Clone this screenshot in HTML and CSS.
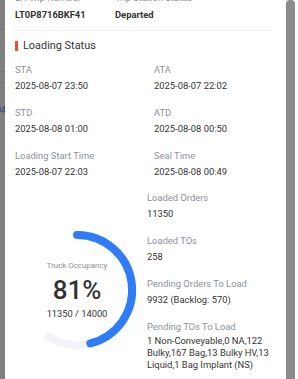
FILE: index.html
```html
<!DOCTYPE html>
<html>

<head>
  <meta charset="UTF-8" />
  <title>Loading Status</title>
  <link rel="stylesheet" href="styles.css">
</head>

<body>
  <div class="page">
    <!-- table behind the overlay -->
    <div class="backdrop">
      <div class="bg-row"></div>
      <div class="bg-row"></div>
      <div class="bg-row"></div>
      <div class="bg-link">04</div>
    </div>

    <div class="drawer">
      <div class="trip">
        <div class="field">
          <div class="label">LH Trip Number</div>
          <div class="value strong">LT0P8716BKF41</div>
        </div>
        <div class="field">
          <div class="label">Trip Station Status</div>
          <div class="value strong">Departed</div>
        </div>
      </div>

      <div class="divider"></div>

      <h3 class="section-title">Loading Status</h3>

      <div class="grid">
        <div class="field">
          <div class="label">STA</div>
          <div class="value">2025-08-07 23:50</div>
        </div>
        <div class="field">
          <div class="label">ATA</div>
          <div class="value">2025-08-07 22:02</div>
        </div>
        <div class="field">
          <div class="label">STD</div>
          <div class="value">2025-08-08 01:00</div>
        </div>
        <div class="field">
          <div class="label">ATD</div>
          <div class="value">2025-08-08 00:50</div>
        </div>
        <div class="field">
          <div class="label">Loading Start Time</div>
          <div class="value">2025-08-07 22:03</div>
        </div>
        <div class="field">
          <div class="label">Seal Time</div>
          <div class="value">2025-08-08 00:49</div>
        </div>
      </div>

      <div class="summary">
        <div class="gauge">
          <svg viewBox="0 0 124 130" width="124" height="130">
            <path d="M62 10 A55 55 0 1 1 32.9 111.6" fill="none" stroke="#f2f4f7" stroke-width="8"
              stroke-linecap="round"></path>
            <path d="M62 10 A55 55 0 0 1 75.3 118.4" fill="none" stroke="#2f7cf6" stroke-width="8"
              stroke-linecap="round"></path>
          </svg>
          <div class="gauge-text">
            <div class="gauge-title">Truck Occupancy</div>
            <div class="gauge-percent">81%</div>
            <div class="gauge-count">11350 / 14000</div>
          </div>
        </div>

        <div class="stats">
          <div class="field">
            <div class="label">Loaded Orders</div>
            <div class="value">11350</div>
          </div>
          <div class="field">
            <div class="label">Loaded TOs</div>
            <div class="value">258</div>
          </div>
          <div class="field">
            <div class="label">Pending Orders To Load</div>
            <div class="value">9932 (Backlog: 570)</div>
          </div>
          <div class="field">
            <div class="label">Pending TOs To Load</div>
            <div class="value multi">1 Non-Conveyable,0 NA,122 Bulky,167 Bag,13 Bulky HV,13 Liquid,1 Bag Implant (NS)</div>
          </div>
        </div>
      </div>
    </div>

    <div class="scroll">
      <div class="thumb"></div>
    </div>
  </div>
</body>

</html>
```

FILE: styles.css
```css
body {
  margin: 0;
  font-family: Roboto, "Noto Sans", sans-serif;
  background-color: #808080;
}

.page {
  display: flex;
  width: 298px;
  height: 379px;
  overflow: hidden;
}

.backdrop {
  width: 5px;
  flex-shrink: 0;
  overflow: hidden;
  background-color: #7f7f7f;
  display: flex;
  flex-direction: column;
}

.bg-row {
  height: 1px;
  background-color: #747474;
  margin-top: 29px;
}

.bg-row:nth-child(2) {
  margin-top: 41px;
}

.bg-row:nth-child(3) {
  margin-top: 10px;
}

.bg-link {
  margin-top: 22px;
  margin-left: -4px;
  font-size: 9px;
  color: #2c3f8c;
}

.drawer {
  width: 281px;
  flex-shrink: 0;
  background-color: #fff;
  padding: 0 14px 0 10px;
  box-sizing: border-box;
}

.scroll {
  width: 12px;
  flex-shrink: 0;
  background-color: #fff;
}

.thumb {
  width: 9px;
  height: 100%;
  background-color: #8b8b8b;
  border-radius: 4px 4px 0 0;
}

.field {
  display: flex;
  flex-direction: column;
  gap: 2px;
}

.label {
  font-size: 9.4px;
  line-height: 14px;
  color: #8c9099;
  white-space: nowrap;
}

.value {
  font-size: 9.4px;
  line-height: 14px;
  color: #333;
}

.strong {
  font-weight: 700;
}

.trip {
  display: grid;
  grid-template-columns: 100px 1fr;
  margin-top: -9px;
}

.trip .field {
  gap: 3px;
}

.divider {
  height: 1px;
  background-color: #eceef2;
  margin-top: 8px;
}

.section-title {
  margin: 7px 0 0;
  font-size: 10.9px;
  line-height: 16px;
  font-weight: 400;
  color: #333;
  display: flex;
  align-items: center;
  gap: 5px;
}

.section-title::before {
  content: "";
  width: 3px;
  height: 10px;
  background-color: #ee4d2d;
}

.grid {
  display: grid;
  grid-template-columns: 139px 1fr;
  row-gap: 13px;
  margin-top: 9px;
}

.summary {
  display: flex;
  margin-top: 12px;
}

.gauge {
  width: 132px;
  flex-shrink: 0;
  position: relative;
  height: 130px;
  margin-top: 34px;
}

.gauge svg {
  display: block;
}

.gauge-text {
  position: absolute;
  left: 0;
  top: 0;
  width: 124px;
  height: 130px;
  display: flex;
  flex-direction: column;
  align-items: center;
  justify-content: center;
}

.gauge-title {
  font-size: 7.9px;
  line-height: 12px;
  color: #8c9099;
}

.gauge-percent {
  font-size: 26px;
  line-height: 30px;
  font-weight: 500;
  color: #333;
  margin-top: 3px;
}

.gauge-count {
  font-size: 9.3px;
  line-height: 14px;
  color: #333;
  margin-top: 2px;
}

.stats {
  flex: 1;
  display: flex;
  flex-direction: column;
  gap: 13px;
}

.value.multi {
  line-height: 12px;
  margin-top: -1px;
}
```
